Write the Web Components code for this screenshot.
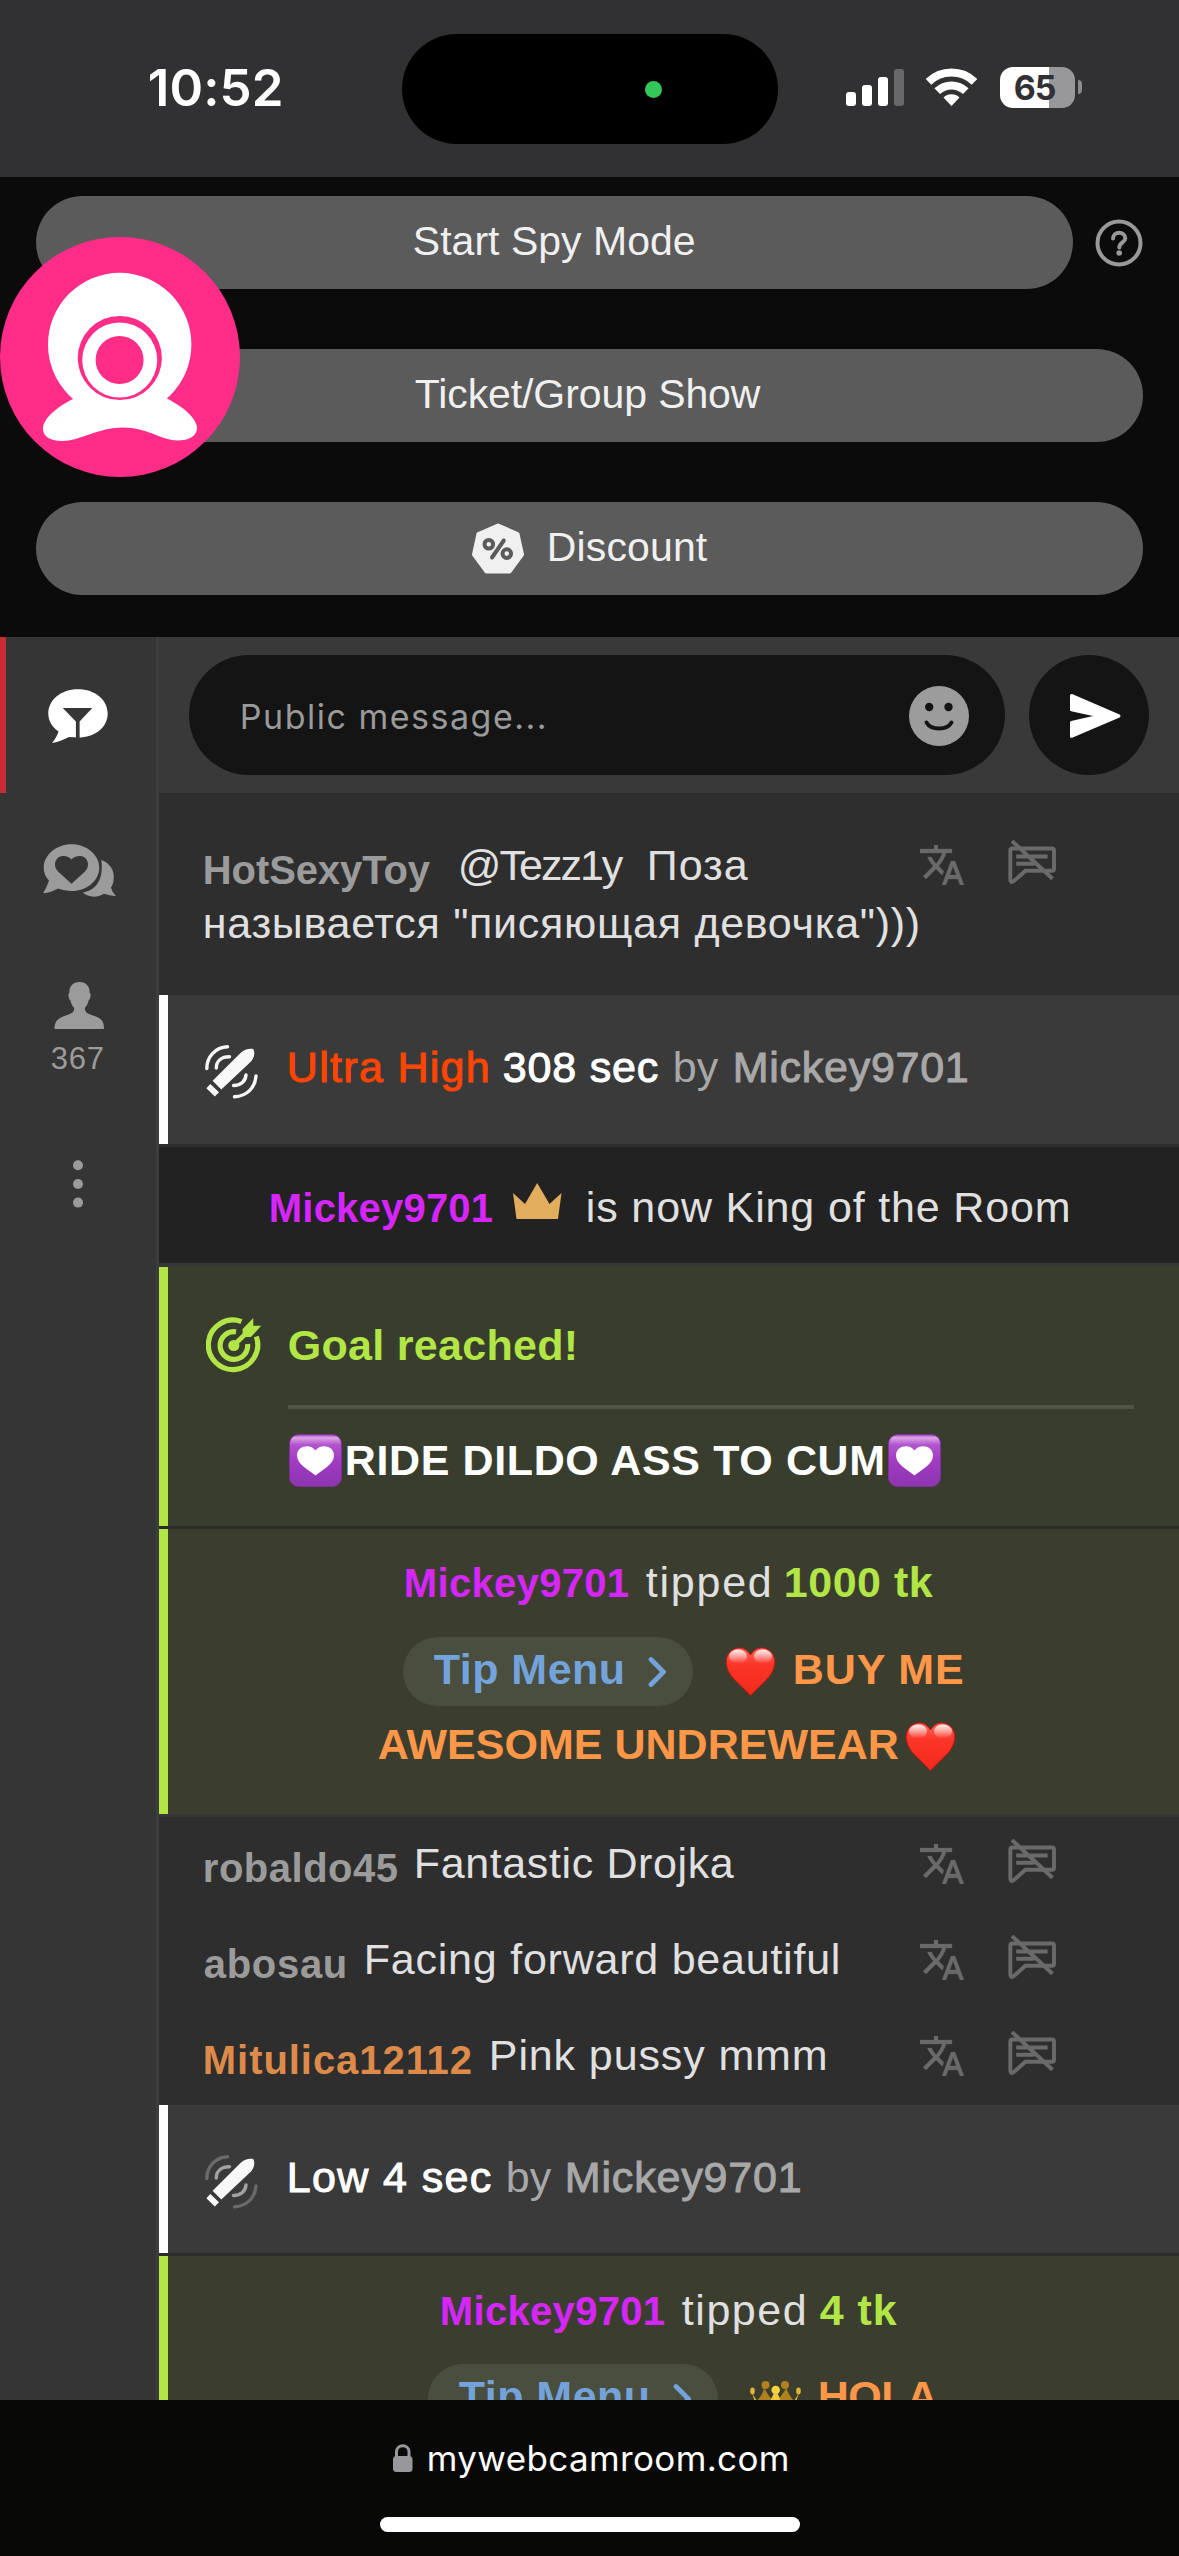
<!DOCTYPE html>
<html lang="en">
<head>
<meta charset="utf-8">
<title>mywebcamroom.com</title>
<style>
html,body{margin:0;background:#0b0b0b}
body{width:1179px;height:2556px;overflow:hidden;font-family:"Liberation Sans",Arial,sans-serif;font-size:43px;color:#e0e0e0}
</style>
</head>
<body>
<phone-screen></phone-screen>
<script>
const ctx = document.createElement('canvas').getContext('2d');

/* One run of text whose inked width is set by "w"; tracking is spread over its letters. */
customElements.define('text-run', class extends HTMLElement {
  connectedCallback() {
    const root = this.attachShadow({mode: 'open'});
    root.innerHTML = `<style>:host{display:block;flex:none;white-space:nowrap;line-height:47px;height:47px}span{display:block;white-space:pre}</style><span><slot></slot></span>`;
    const w = +this.getAttribute('w');
    this.style.width = w + 'px';
    this.style.marginLeft = (this.getAttribute('gap') || 0) + 'px';
    this.style.marginTop = (this.getAttribute('dy') || 0) + 'px';
    const cs = getComputedStyle(this), t = this.textContent;
    ctx.font = `${cs.fontWeight} ${cs.fontSize} ${cs.fontFamily}`;
    const m = ctx.measureText(t);
    const ink = m.actualBoundingBoxRight + m.actualBoundingBoxLeft;
    this.style.letterSpacing = ((w - 1 - ink) / ([...t].length - 1)).toFixed(3) + 'px';
    root.querySelector('span').style.marginLeft = (m.actualBoundingBoxLeft + .8).toFixed(2) + 'px';
  }
});

const toy = (inner, outer) => `
 <path fill="#f8f8f8" d="M212.6 1080.7L240.5 1053C245 1048.5 250 1048.2 253.2 1049C255.2 1052.4 254.5 1057.5 251 1061.5L221.3 1089.6ZM206.4 1088.2L210.3 1084 219 1092.2 214.8 1096.6Z"/>
 <g fill="none" stroke="#f8f8f8" stroke-width="3.4" stroke-linecap="round">
 <g opacity="${outer}"><path d="M206.8 1068.5C206.8 1057 215 1047.5 227.5 1046.8"/><path d="M256 1076C255 1088 247 1096 234.5 1096.8"/></g>
 <g opacity="${inner}"><path d="M216.3 1068C216.3 1061 221.5 1056.8 229.5 1056.8"/><path d="M246 1075C245.5 1081 241 1085.5 233.5 1085.5"/></g></g>`;
const heart = `<defs><linearGradient id="g" x1="0" y1="0" x2="0" y2="1"><stop offset="0" stop-color="#ff6a60"/><stop offset=".35" stop-color="#fb3527"/><stop offset="1" stop-color="#f32a1c"/></linearGradient>
 <linearGradient id="h" x1="0" y1="0" x2="0" y2="1"><stop offset="0" stop-color="#fff" stop-opacity=".9"/><stop offset="1" stop-color="#fff" stop-opacity="0"/></linearGradient></defs>
 <path fill="url(#g)" stroke="#d3130a" stroke-width="1" d="M25.5 8C21 .5 14 0 9.500 2 3 5 .5 11 1.500 18 3.500 30 14 36 25.500 48.500 37 36 47.500 30 49.500 18 50.500 11 48 5 41.500 2 37 0 30 .5 25.500 8Z"/>
 <ellipse cx="13" cy="9.500" rx="9" ry="7" fill="url(#h)"/><ellipse cx="38" cy="9.500" rx="9" ry="7" fill="url(#h)"/>`;

const ICONS = {
  signal: ['846 68 59 39', 59, 39, `<g fill="#fff"><rect x="846" y="92" width="10" height="14" rx="3"/><rect x="862" y="85" width="10" height="21" rx="3"/><rect x="878" y="77" width="10" height="29" rx="3"/><rect x="894" y="69" width="10" height="37" rx="3" opacity=".27"/></g>`],
  wifi: ['926 68 52 39', 52, 39, `<g fill="none" stroke="#fff" stroke-width="8"><path d="M928.500 81.800A33 33 0 0 1 974.500 81.800"/><path d="M937.200 91.200A20.500 20.500 0 0 1 965.800 91.200"/></g><path fill="#fff" d="M951.500 106L943.500 97.500A11.500 11.500 0 0 1 959.500 97.500Z"/>`],
  help: ['1095 218 48 48', 48, 48, `<circle cx="1119" cy="242" r="21.500" fill="none" stroke="#999" stroke-width="4"/><path d="M1113 237.500C1113 230 1125.300 230 1125.300 237.300C1125.300 241.500 1119.300 241.500 1119.300 246.500" fill="none" stroke="#999" stroke-width="4" stroke-linecap="round"/><circle cx="1119.200" cy="252" r="2.800" fill="#999"/>`],
  discount: ['471 522 54 53', 54, 53, `<path d="M498 525.500L517.500 534 522 554.500 509.500 571.500H486.500L474 554.500 478.500 534Z" fill="#f0f0f0" stroke="#f0f0f0" stroke-width="4" stroke-linejoin="round"/><g fill="none" stroke="#5b5b5b" stroke-width="4" stroke-linecap="round"><circle cx="488.800" cy="544.300" r="4.300"/><circle cx="506.800" cy="553.600" r="4.300"/><path d="M503.800 540.500L492 557.500"/></g>`],
  cam: ['0 237 240 240', 240, 240, `<circle cx="120" cy="357" r="120" fill="#ff2d87"/><circle cx="119.700" cy="344.500" r="71.700" fill="#fff"/><path fill="#fff" d="M75 398C58 406 43 418 43 429C43 437 51 441 62 441C80 441 98 427.500 123 427.500C148 427.500 160 440 177 440.500C189 440.500 197 436 197 428C197 418 182 406 166 398Z"/><circle cx="119.800" cy="358" r="42.100" fill="#ff2d87"/><circle cx="119.700" cy="360" r="37.500" fill="#fff"/><circle cx="119.600" cy="360" r="24" fill="#ff2d87"/>`],
  publicChat: ['48 689 60 55', 60, 55, `<path fill="#fff" d="M78 689.200C95 689.200 107.700 699.800 107.700 713.500S95 737.600 78 737.600L69 737C64 739.500 59 742 52 743C55.500 739 57.500 735 58.500 731.500C52 727 48.300 720.500 48.300 713.500C48.300 699.800 61 689.200 78 689.200Z"/><path fill="#353535" d="M62.800 708H92.300L79.600 721.500V738.500H75.900V721.500Z"/>`],
  privateChat: ['43 844 74 54', 74, 54, `<path fill="#9b9b9b" fill-rule="evenodd" d="M71.500 844.200C87 844.200 99.300 855 99.300 867.700S87 891 71.500 891C67 891 62 890 58 888.500C53 891 49 892.800 43 893.300C46.500 888 47.500 884 49 880.500C45.500 877 43.700 872.500 43.700 867.700C43.700 855 56 844.200 71.500 844.200ZM71.500 883.800L58 871.500C52.500 866 55 857 62 856C66 855.500 69.500 857 71.500 859.500C73.500 857 77 855.500 81 856C88 857 90.500 866 85 871.500Z"/><path fill="#9b9b9b" d="M101.300 860C109.500 863 113.800 869.500 113.800 876.500C113.800 881 113 884.500 111 887.500C112 891 113.500 893.500 116 896C111.500 896 107.500 895 104 893.800C97 898 88 897.500 82.800 892.500C96 890.500 104 879.500 101.300 860Z"/>`],
  person: ['54 981 51 49', 51, 49, `<path fill="#9b9b9b" d="M79.500 982C87 982 90 987.500 89.500 992.500C91.500 993.500 90.500 999 88.600 1000.500C88 1003.500 86.500 1006 84.800 1008C84.800 1014 90 1014 96 1016.500C102 1019 104 1022 104 1029H54.500C54.500 1022 57 1019 63 1016.500C69 1014 74.200 1014 74.200 1008C72.500 1006 71 1003.500 70.400 1000.500C68.500 999 67.500 993.500 69.500 992.500C69 987.500 72 982 79.500 982Z"/>`],
  more: ['72 1160 12 49', 12, 49, `<g fill="#9b9b9b"><circle cx="78" cy="1165.300" r="5"/><circle cx="78" cy="1184" r="5"/><circle cx="78" cy="1202.600" r="5"/></g>`],
  smile: ['909 686 60 60', 60, 60, `<circle cx="939" cy="716" r="30" fill="#9c9c9c"/><circle cx="929.200" cy="707" r="4.200" fill="#141414"/><circle cx="948.500" cy="707" r="4.200" fill="#141414"/><path d="M926.500 722.500C931 730.500 947 730.500 951.500 722.500" fill="none" stroke="#141414" stroke-width="3.800" stroke-linecap="round"/>`],
  send: ['1069 693 53 46', 53, 46, `<path fill="#fff" stroke="#fff" stroke-width="3" stroke-linejoin="round" d="M1071.500 695.500L1119 716 1071.500 736.300V722.500L1100 716 1071.500 709.700Z"/>`],
  translate: ['1 2 22 20', 44, 40, `<path fill="#6a6a6a" stroke="#6a6a6a" stroke-width=".15" d="M12.870 15.070l-2.540-2.510.03-.03c1.740-1.940 2.980-4.170 3.710-6.530H17V4h-7V2H8v2H1v1.990h11.170C11.500 7.920 10.440 9.750 9 11.350 8.070 10.320 7.300 9.190 6.690 8h-2c.73 1.630 1.730 3.170 2.980 4.560l-5.090 5.020L4 19l5-5 3.110 3.110.76-2.040zM18.500 10h-2L12 22h2l1.120-3h4.750L21 22h2l-4.500-12zm-2.620 7l1.620-4.330L19.120 17h-3.240z"/>`],
  mute: ['1008 840 48 44', 48, 44, `<g fill="none" stroke="#6a6a6a" stroke-width="3.900"><path d="M1010.300 850.500Q1010.300 848.500 1012.300 848.500H1052Q1054 848.500 1054 850.500V868.700Q1054 870.700 1052 870.700H1025.500L1014 881Q1010.300 883.500 1010.300 879.800Z"/><path d="M1016.200 856.500H1047.600M1016.200 863.800H1034.500M1012 841L1052.500 878.800"/></g>`],
  toyHigh: ['204 1044 54 55', 54, 55, toy(1, 1)],
  toyLow: ['204 1044 54 55', 54, 55, toy(.55, .25)],
  crown: ['513 1183 49 36', 49, 36, `<path fill="#e2ad5c" d="M513 1193L525 1204 537.200 1183 549.500 1204 561.500 1193 558 1219H516.500Z"/>`],
  goal: ['206 1317 56 56', 56, 56, `<g fill="none" stroke="#b2e546" stroke-width="5.200"><path d="M241.500 1321.600A24.700 24.700 0 1 0 256.300 1336.500"/><path d="M236 1331.900A13.800 13.800 0 1 0 247.600 1344"/></g><circle cx="233.800" cy="1345.500" r="5.600" fill="#b2e546"/><path d="M234 1345L248 1331.500" stroke="#b2e546" stroke-width="4.600"/><path fill="#b2e546" d="M242.600 1329L253.300 1318V1325.800H261.200L251 1337H242.600Z"/>`],
  purple: ['0 0 53 53', 53, 53, `<defs><linearGradient id="p" x1="0" y1="0" x2="0" y2="1"><stop offset="0" stop-color="#8f3fae"/><stop offset=".06" stop-color="#dfa3e8"/><stop offset=".2" stop-color="#b055cd"/><stop offset=".5" stop-color="#a23bc4"/><stop offset="1" stop-color="#8d35ae"/></linearGradient></defs><rect x=".5" y=".5" width="52" height="52" rx="9" fill="url(#p)" stroke="#80309a"/><path fill="#fff" d="M26.500 16.500C31 9.500 44.800 11 45 21.500C45 30.500 34 35 26.500 41.500C19 35 8 30.500 8 21.500C8.200 11 22 9.500 26.500 16.500Z"/>`],
  heart: ['0 0 51 50', 51, 50, heart],
  chevron: ['648 1656 19 32', 19, 32, `<path d="M651 1659.500L663.500 1672 651 1684.500" fill="none" stroke="#74a3dc" stroke-width="4.800" stroke-linecap="round" stroke-linejoin="round"/>`],
  royal: ['0 0 51 50', 51, 50, `<g fill="#b0821d"><circle cx="15.500" cy="4" r="4"/><circle cx="35" cy="4" r="4"/><path d="M14 7C13 13 9 18 5 22V45H46V22C42 18 38 13 36.500 7L31 15 25 22 19 15Z"/></g><g fill="#e3b530"><ellipse cx="2.500" cy="10" rx="2.300" ry="3.400"/><ellipse cx="48.500" cy="10" rx="2.300" ry="3.400"/><path d="M2 12L6 24V44H45V24L49 12 44 20 38 22 31 20 27.500 12H24L20 20 13 22 7 20Z"/></g><circle cx="25.700" cy="9" r="4.300" fill="#f6d53c"/><path fill="#f0ca3a" d="M24.500 12H27L32 24H19Z"/>`],
  lock: ['392 2444 22 29', 22, 29, `<rect x="393" y="2456" width="19.500" height="16" rx="3.500" fill="#98989a"/><path d="M396.500 2458V2452C396.500 2443.800 409 2443.800 409 2452V2458" fill="none" stroke="#98989a" stroke-width="3"/>`]
};
customElements.define('ui-icon', class extends HTMLElement {
  connectedCallback() {
    const [box, w, h, art] = ICONS[this.getAttribute('name')];
    this.attachShadow({mode: 'open'}).innerHTML = `<style>:host{display:block;flex:none;width:${w}px;height:${h}px}svg{display:block}</style><svg width="${w}" height="${h}" viewBox="${box}">${art}</svg>`;
    this.style.marginLeft = (this.getAttribute('gap') || 0) + 'px';
    this.style.marginTop = (this.getAttribute('dy') || 0) + 'px';
  }
});

const define = (tag, css, html) => customElements.define(tag, class extends HTMLElement {
  constructor() {
    super();
    this.attachShadow({mode: 'open'}).innerHTML = `<style>*{box-sizing:border-box}${css}</style>${html}`;
  }
});

define('status-bar', `
:host{display:flex;align-items:flex-start;box-sizing:border-box;height:177px;background:#313133;color:#fff;font-family:Inter,sans-serif;padding-left:149px}
.time{font-size:51px;font-weight:600}
.island{width:376px;height:110px;border-radius:55px;background:#000;margin:34px 0 0 121px;display:flex;align-items:center;padding-left:243px}
.island i{width:17px;height:17px;border-radius:50%;background:#34c759}
.battery{width:75px;height:41px;border-radius:13px;margin:67px 0 0 22px;background:linear-gradient(90deg,#fff 49px,#98989a 49px);color:#313133;font-size:34px;font-weight:700;display:flex}
.nub{width:4px;height:14px;border-radius:0 4px 4px 0;background:#8b8b8d;margin:80px 0 0 3px}`,
`<text-run class="time" w="132" dy="64">10:52</text-run><div class="island"><i></i></div>
<ui-icon name="signal" gap="68" dy="68"></ui-icon><ui-icon name="wifi" gap="21" dy="68"></ui-icon>
<div class="battery"><text-run w="42" gap="14" dy="-3">65</text-run></div><div class="nub"></div>`);

define('show-button', `
:host{display:flex;flex:1;height:93px;border-radius:46.5px;background:#5b5b5b;color:#f0f0f0;font-size:41px;align-items:flex-start}`, `<slot></slot>`);

define('show-panel', `
:host{display:flex;flex-direction:column;gap:60px;box-sizing:border-box;height:460px;padding:19px 36px 0;background:#0b0b0b;position:relative}
.row{display:flex;align-items:center}
.float{position:absolute;left:0;top:60px}`,
`<div class="row"><show-button><text-run w="281" gap="377" dy="22">Start Spy Mode</text-run></show-button><ui-icon name="help" gap="22"></ui-icon></div>
<div class="row"><show-button><text-run w="347" gap="378" dy="22">Ticket/Group Show</text-run></show-button></div>
<div class="row"><show-button><ui-icon name="discount" gap="435" dy="20"></ui-icon><text-run w="159" gap="24" dy="22">Discount</text-run></show-button></div>
<ui-icon class="float" name="cam" dy="0"></ui-icon>`);

define('side-bar', `
:host{display:flex;flex-direction:column;flex:none;box-sizing:border-box;width:159px;background:#353535;border-right:3px solid #3d3d3d}
.tab{height:156px;border-left:6px solid #c72c35;padding:52px 0 0 42px}
.pm{padding:51px 0 0 43px}.users{padding:83px 0 0 54px}
.count{color:#9b9b9b;font-size:31px;display:flex;padding-left:51px}
.more{padding:78px 0 0 72px}`,
`<div class="tab"><ui-icon name="publicChat"></ui-icon></div><div class="pm"><ui-icon name="privateChat"></ui-icon></div>
<div class="users"><ui-icon name="person"></ui-icon></div><div class="count"><text-run w="52" dy="5">367</text-run></div><div class="more"><ui-icon name="more"></ui-icon></div>`);

define('message-input', `
:host{display:flex;box-sizing:border-box;height:156px;background:#393939;padding:18px 0 0 30px}
.field{width:816px;height:120px;border-radius:60px;background:#141414;color:#9a9a9a;font-family:Inter,sans-serif;font-size:34px;display:flex;align-items:flex-start}
.send{width:120px;height:120px;border-radius:50%;background:#141414;margin-left:24px;display:flex;align-items:flex-start}`,
`<div class="field"><text-run w="304" gap="52" dy="38">Public message...</text-run><ui-icon name="smile" gap="364" dy="31"></ui-icon></div><div class="send"><ui-icon name="send" gap="40" dy="38"></ui-icon></div>`);

/* A horizontal strip of runs and icons. */
define('chat-line', `:host{display:flex;align-items:flex-start;height:var(--h,58px);padding-left:var(--x,0)}`, `<slot></slot>`);

define('message-tools', `:host{display:flex;margin-left:auto;margin-top:var(--lift,-1px)}`,
`<ui-icon name="translate" dy="5"></ui-icon><ui-icon name="mute" gap="44"></ui-icon>`);

define('chat-message', `:host{display:block;box-sizing:border-box;height:var(--row,96px);padding:var(--top,23px) 123px 0 45px;background:#2e2e2e}
::slotted(chat-line){width:852px}`, `<slot></slot>`);

define('chat-event', `:host{display:block;box-sizing:border-box;overflow:hidden;height:var(--row);padding:var(--top) 45px 0 0;background:var(--bg,#3a3a3a);border-left:9px solid var(--bar,#fff)}
:host([kind=king]){--bg:#222;--bar:#222}
:host([kind=goal]){--bg:#393d2d;--bar:#b2e546}
:host([kind=tip]){--bg:#3b3e2f;--bar:#b2e546}`, `<slot></slot>`);

define('thin-rule', `:host{display:block;height:var(--t,3px);background:var(--c,#2e2e2e);margin:var(--m,0)}`, ``);

define('tip-pill', `:host{display:flex;flex:none;align-items:flex-start;box-sizing:border-box;width:290px;height:69px;border-radius:35px;background:#494e3e;color:#74a3dc;padding:9px 0 0 30px;font-weight:700}`,
`<text-run w="190">Tip Menu</text-run><ui-icon name="chevron" gap="25" dy="10"></ui-icon>`);

define('chat-feed', `
:host{display:block;background:#2e2e2e}
.n{font-size:40px;font-weight:700;color:#9b9b9b}
.pink{color:#d626fb}.amber{color:#de8a49}
.b{font-weight:700}.w{color:#fff}.g{color:#a8a8a8}
.med{-webkit-text-stroke:1px currentColor}
.hot{color:#ff4500}.lime{color:#b2e546}.or{color:#ff9648}`,
`<chat-message style="--row:202px;--top:49px">
 <chat-line><text-run class="n" w="227" dy="5">HotSexyToy</text-run><text-run w="164" gap="29">@Tezz1y</text-run><text-run w="99" gap="25">Поза</text-run><message-tools style="--lift:-2px"></message-tools></chat-line>
 <chat-line><text-run w="714">называется "писяющая девочка")))</text-run></chat-line>
</chat-message>
<chat-event style="--row:149px;--top:49px"><chat-line style="--x:36px"><ui-icon name="toyHigh"></ui-icon><text-run class="med hot" w="199" gap="31">Ultra High</text-run><text-run class="med w" w="155" gap="15">308 sec</text-run><text-run class="g" w="45" gap="16">by</text-run><text-run class="g med" w="232" gap="16">Mickey9701</text-run></chat-line></chat-event>
<thin-rule></thin-rule>
<chat-event kind="king" style="--row:116px;--top:37px"><chat-line style="--x:102px"><text-run class="n pink" w="223" dy="1">Mickey9701</text-run><ui-icon name="crown" gap="20" dy="-1"></ui-icon><text-run w="481" gap="25">is now King of the Room</text-run></chat-line></chat-event>
<thin-rule style="--t:4px;--c:#353636"></thin-rule>
<chat-event kind="goal" style="--row:259px;--top:50px"><chat-line style="--x:38px;--h:88px"><ui-icon name="goal"></ui-icon><text-run class="b lime" w="287" gap="26" dy="5">Goal reached!</text-run></chat-line>
 <thin-rule style="--t:4px;--c:#515443;--m:0 0 0 120px"></thin-rule>
 <chat-line style="--x:121px"><ui-icon name="purple" dy="25"></ui-icon><text-run class="b w" w="538" gap="4" dy="28">RIDE DILDO ASS TO CUM</text-run><ui-icon name="purple" gap="4" dy="25"></ui-icon></chat-line></chat-event>
<thin-rule style="--c:#2c2d2b"></thin-rule>
<chat-event kind="tip" style="--row:285px;--top:30px"><chat-line style="--x:237px;--h:78px"><text-run class="n pink" w="224" dy="1">Mickey9701</text-run><text-run w="125" gap="16">tipped</text-run><text-run class="b lime" w="148" gap="15">1000 tk</text-run></chat-line>
 <chat-line style="--x:235px;--h:84px"><tip-pill></tip-pill><ui-icon name="heart" gap="32" dy="10"></ui-icon><text-run class="b or" w="169" gap="18" dy="9">BUY ME</text-run></chat-line>
 <chat-line style="--x:210px"><text-run class="b or" w="521">AWESOME UNDREWEAR</text-run><ui-icon name="heart" gap="6" dy="1"></ui-icon></chat-line></chat-event>
<thin-rule style="--c:#353635"></thin-rule>
<chat-message><chat-line><text-run class="n" w="194" dy="5">robaldo45</text-run><text-run w="318" gap="18">Fantastic Drojka</text-run><message-tools></message-tools></chat-line></chat-message>
<chat-message><chat-line><text-run class="n" w="141" dy="5">abosau</text-run><text-run w="472" gap="21">Facing forward beautiful</text-run><message-tools></message-tools></chat-line></chat-message>
<chat-message><chat-line><text-run class="n amber" w="267" dy="5">Mitulica12112</text-run><text-run w="334" gap="20">Pink pussy mmm</text-run><message-tools></message-tools></chat-line></chat-message>
<chat-event style="--row:148px;--top:49px"><chat-line style="--x:36px"><ui-icon name="toyLow"></ui-icon><text-run class="med w" w="202" gap="31">Low 4 sec</text-run><text-run class="g" w="45" gap="16">by</text-run><text-run class="g med" w="233" gap="15">Mickey9701</text-run></chat-line></chat-event>
<thin-rule style="--c:#2c2d2b"></thin-rule>
<chat-event kind="tip" style="--row:144px;--top:31px"><chat-line style="--x:273px;--h:77px"><text-run class="n pink" w="224" dy="1">Mickey9701</text-run><text-run w="124" gap="16">tipped</text-run><text-run class="b lime" w="78" gap="14">4 tk</text-run></chat-line>
 <chat-line style="--x:260px"><tip-pill></tip-pill><ui-icon name="royal" gap="32" dy="17"></ui-icon><text-run class="b or" w="118" gap="18" dy="9">HOLA</text-run></chat-line></chat-event>`);

define('browser-bar', `
:host{display:block;box-sizing:border-box;height:156px;background:#080806;color:#fff;font-family:Inter,sans-serif;font-size:35px}
.url{display:flex;align-items:flex-start;padding-left:392px;height:117px}
.home{width:420px;height:15px;border-radius:8px;background:#fff;margin-left:380px}`,
`<div class="url"><ui-icon name="lock" dy="44"></ui-icon><text-run w="359" gap="14" dy="35">mywebcamroom.com</text-run></div><div class="home"></div>`);

define('phone-screen', `
:host{display:flex;flex-direction:column;width:1179px;height:2556px;overflow:hidden}
main{display:flex;height:1763px;overflow:hidden}section{flex:1}`,
`<status-bar></status-bar><show-panel></show-panel><main><side-bar></side-bar><section><message-input></message-input><chat-feed></chat-feed></section></main><browser-bar></browser-bar>`);
</script>
</body>
</html>
